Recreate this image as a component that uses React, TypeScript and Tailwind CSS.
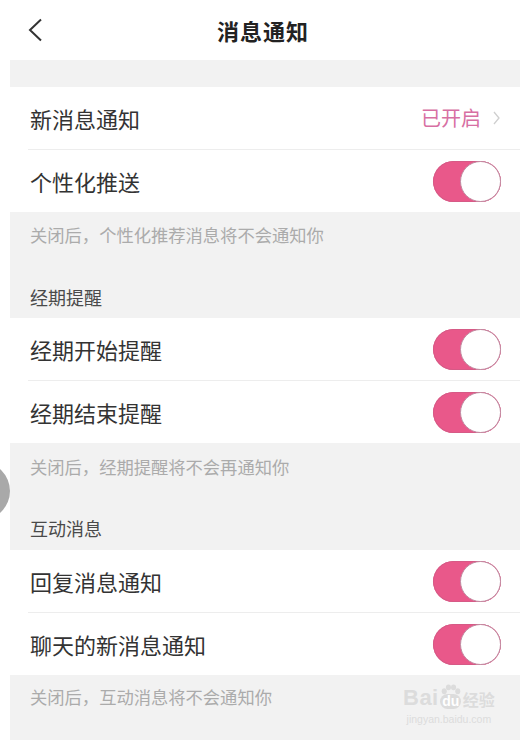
import React from "react";

const Toggle: React.FC = () => (
  <div className="flex items-center justify-end w-[68px] h-[41px] rounded-full bg-[#e9588a] shadow-[inset_0_0_0_1px_#d65a86]">
    <div className="w-[41px] h-[41px] rounded-full bg-white border-[1.5px] border-[#c08aa0]" />
  </div>
);

const Row: React.FC<{ label: string; right?: React.ReactNode }> = ({ label, right }) => (
  <div className="flex items-center justify-between h-[62px] pl-[20px] pr-[19px] bg-white">
    <span className="text-[22px] text-[#333]">{label}</span>
    {right ?? <Toggle />}
  </div>
);

const Divider: React.FC = () => (
  <div className="bg-white">
    <div className="ml-[18px] h-px bg-[#ededed]" />
  </div>
);

const App: React.FC = () => {
  return (
    <div
      className="relative w-[526px] h-[742px] overflow-hidden bg-white flex flex-col"
      style={{ fontFamily: '"Noto Sans CJK SC", "Noto Sans", sans-serif' }}
    >
      {/* header */}
      <div className="grid grid-cols-[1fr_auto_1fr] items-center h-[60px] shrink-0">
        <svg width="16" height="24" viewBox="0 0 16 24" className="ml-[27px]">
          <path d="M14 1.5 L3 12 L14 22.5" fill="none" stroke="#333" strokeWidth="2" />
        </svg>
        <h1 className="text-[22px] font-bold text-[#222] tracking-[1px]">消息通知</h1>
        <div />
      </div>

      <div className="flex flex-col flex-1 ml-[10px] mr-[6px]">
        <div className="h-[27px] bg-[#f2f2f2]" />

        <Row
          label="新消息通知"
          right={
            <div className="flex items-center gap-[12px] pr-[1px]">
              <span className="text-[20px] text-[#d76fa3]">已开启</span>
              <svg width="7" height="14" viewBox="0 0 7 14">
                <path d="M1 1 L6 7 L1 13" fill="none" stroke="#cfcfcf" strokeWidth="1.3" />
              </svg>
            </div>
          }
        />
        <Divider />
        <Row label="个性化推送" />

        <div className="bg-[#f2f2f2] pl-[20px] pt-[13px] pb-[11px] flex flex-col gap-[42px]">
          <p className="text-[17.3px] leading-[20px] text-[#ababab]">关闭后，个性化推荐消息将不会通知你</p>
          <p className="text-[18px] leading-[20px] text-[#4a4a4a]">经期提醒</p>
        </div>

        <Row label="经期开始提醒" />
        <Divider />
        <Row label="经期结束提醒" />

        <div className="bg-[#f2f2f2] pl-[20px] pt-[14px] pb-[12px] flex flex-col gap-[41px]">
          <p className="text-[17.3px] leading-[20px] text-[#ababab]">关闭后，经期提醒将不会再通知你</p>
          <p className="text-[18px] leading-[20px] text-[#4a4a4a]">互动消息</p>
        </div>

        <Row label="回复消息通知" />
        <Divider />
        <Row label="聊天的新消息通知" />

        <div className="flex-1 bg-[#f2f2f2] pl-[20px] pt-[12px] mb-[2px]">
          <p className="text-[17.3px] leading-[20px] text-[#ababab]">关闭后，互动消息将不会通知你</p>
        </div>
      </div>

      {/* floating side button */}
      <div className="absolute left-[-48px] top-[462px] w-[58px] h-[58px] rounded-full bg-[#a9a9a9]" />

      {/* watermark */}
      <div className="absolute left-[403px] top-[684px] flex flex-col items-center text-[#dcdcdc]">
        <div className="flex items-end gap-[1px]" style={{ fontFamily: '"Liberation Sans", sans-serif' }}>
          <span className="text-[22px] font-bold leading-[22px] tracking-[0.5px]">Bai</span>
          <div className="flex flex-col items-center">
            <svg width="22" height="11" viewBox="0 0 26 12" className="mb-[-1px]">
              <ellipse cx="5" cy="8" rx="3" ry="3.5" fill="#dcdcdc" />
              <ellipse cx="10" cy="3.5" rx="3" ry="3.3" fill="#dcdcdc" />
              <ellipse cx="16" cy="3.5" rx="3" ry="3.3" fill="#dcdcdc" />
              <ellipse cx="21" cy="8" rx="3" ry="3.5" fill="#dcdcdc" />
            </svg>
            <span className="px-[2px] rounded-[8px] bg-[#dcdcdc] text-white text-[14px] font-bold leading-[15px]">du</span>
          </div>
          <span
            className="text-[16px] font-bold leading-[20px]"
            style={{ fontFamily: '"Noto Sans CJK SC", sans-serif' }}
          >
            经验
          </span>
        </div>
        <span className="text-[10.5px] leading-[12px] mt-[4px]" style={{ fontFamily: '"Liberation Sans", sans-serif' }}>
          jingyan.baidu.com
        </span>
      </div>
    </div>
  );
};

export default App;
